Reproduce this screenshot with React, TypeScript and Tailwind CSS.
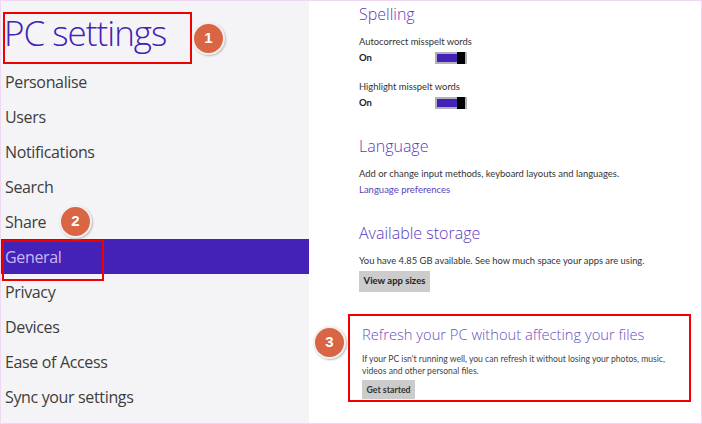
import React from "react";

const navItems = [
  "Personalise",
  "Users",
  "Notifications",
  "Search",
  "Share",
  "General",
  "Privacy",
  "Devices",
  "Ease of Access",
  "Sync your settings",
];

const Badge = ({ label, className }: { label: string; className: string }) => (
  <div
    className={`absolute flex h-[33px] w-[33px] items-center justify-center rounded-full border-2 border-[#f1f1f1] bg-[#d96544] font-['Liberation_Sans',sans-serif] text-[15px] font-bold text-white shadow-[1px_1px_2px_#bbb] ${className}`}
  >
    {label}
  </div>
);

const Toggle = () => (
  <div className="ml-[63px] flex h-[12px] w-[32px] items-center border-2 border-[#b3b0bd] bg-[#4422b8]">
    <div className="ml-auto h-[12px] w-[8px] shrink-0 bg-black" />
  </div>
);

const SwitchRow = ({ label }: { label: string }) => (
  <div>
    <p className="text-[9.4px] leading-[14px] text-[#333]">{label}</p>
    <div className="mt-[2px] flex items-center">
      <span className="w-[13px] text-[9.5px] font-bold leading-[14px] text-[#222]">On</span>
      <Toggle />
    </div>
  </div>
);

export default function App() {
  return (
    <div className="relative flex h-[424px] w-[702px] overflow-hidden border border-[#efd8f0] bg-white font-['Lato',sans-serif]">
      <aside className="h-full w-[308px] shrink-0 bg-[#f4f4f7] font-['Open_Sans',sans-serif]">
        <h1 className="ml-[3px] mt-[8px] h-[52px] text-[35px] font-light leading-[48px] tracking-[-1px] text-[#4322b6]">
          PC settings
        </h1>
        <nav className="mt-[3px] flex flex-col">
          {navItems.map((item) => (
            <div
              key={item}
              className={
                item === "General"
                  ? "flex h-[35px] items-center bg-[#4422b8] pl-[4px] text-[16px] tracking-[-0.35px] text-[#c9b8f5]"
                  : "flex h-[35px] items-center pl-[4px] text-[16px] tracking-[-0.35px] text-[#3d3d3d]"
              }
            >
              {item}
            </div>
          ))}
        </nav>
      </aside>

      <main className="pl-[50px]">
        <h2 className="font-['Open_Sans',sans-serif] text-[16px] font-light leading-[26px] text-[#5a3cbc]">Spelling</h2>
        <div className="mt-[8px] flex flex-col gap-[15px]">
          <SwitchRow label="Autocorrect misspelt words" />
          <SwitchRow label="Highlight misspelt words" />
        </div>

        <h2 className="mt-[23px] font-['Open_Sans',sans-serif] text-[16px] font-light leading-[26px] text-[#5a3cbc]">
          Language
        </h2>
        <p className="mt-[8px] text-[9.45px] leading-[14px] text-[#333]">
          Add or change input methods, keyboard layouts and languages.
        </p>
        <a className="mt-[2px] block text-[9.5px] leading-[14px] text-[#5a3fb8]">Language preferences</a>

        <h2 className="mt-[23px] font-['Open_Sans',sans-serif] text-[16px] font-light leading-[26px] text-[#5a3cbc]">
          Available storage
        </h2>
        <p className="mt-[8px] text-[9.4px] leading-[14px] text-[#333]">
          You have 4.85 GB available. See how much space your apps are using.
        </p>
        <button className="mt-[3px] block h-[21px] w-[71px] bg-[#cccccc] text-[9.5px] font-bold text-[#222]">
          View app sizes
        </button>

        <section className="ml-[-11px] mt-[22px] h-[88px] w-[343px] border-2 border-[#f00000] pl-[12px] pt-[6px]">
          <h2 className="font-['Open_Sans',sans-serif] text-[14.7px] font-light leading-[24px] text-[#6a4fc0]">
            Refresh your PC without affecting your files
          </h2>
          <p className="mt-[7px] w-[312px] text-[8.6px] leading-[12px] text-[#444]">
            If your PC isn't running well, you can refresh it without losing your photos, music, videos and other
            personal files.
          </p>
          <button className="mt-[3px] block h-[19px] w-[53px] bg-[#cccccc] text-[8.8px] font-bold text-[#333]">
            Get started
          </button>
        </section>
      </main>

      {/* annotations */}
      <div className="absolute left-[2px] top-[11px] h-[52px] w-[189px] border-2 border-[#f00000]" />
      <div className="absolute left-[1px] top-[239px] h-[41px] w-[102px] border-2 border-[#f00000]" />
      <Badge label="1" className="left-[191px] top-[21px]" />
      <Badge label="2" className="left-[58px] top-[204px]" />
      <Badge label="3" className="left-[312px] top-[325px]" />
    </div>
  );
}
